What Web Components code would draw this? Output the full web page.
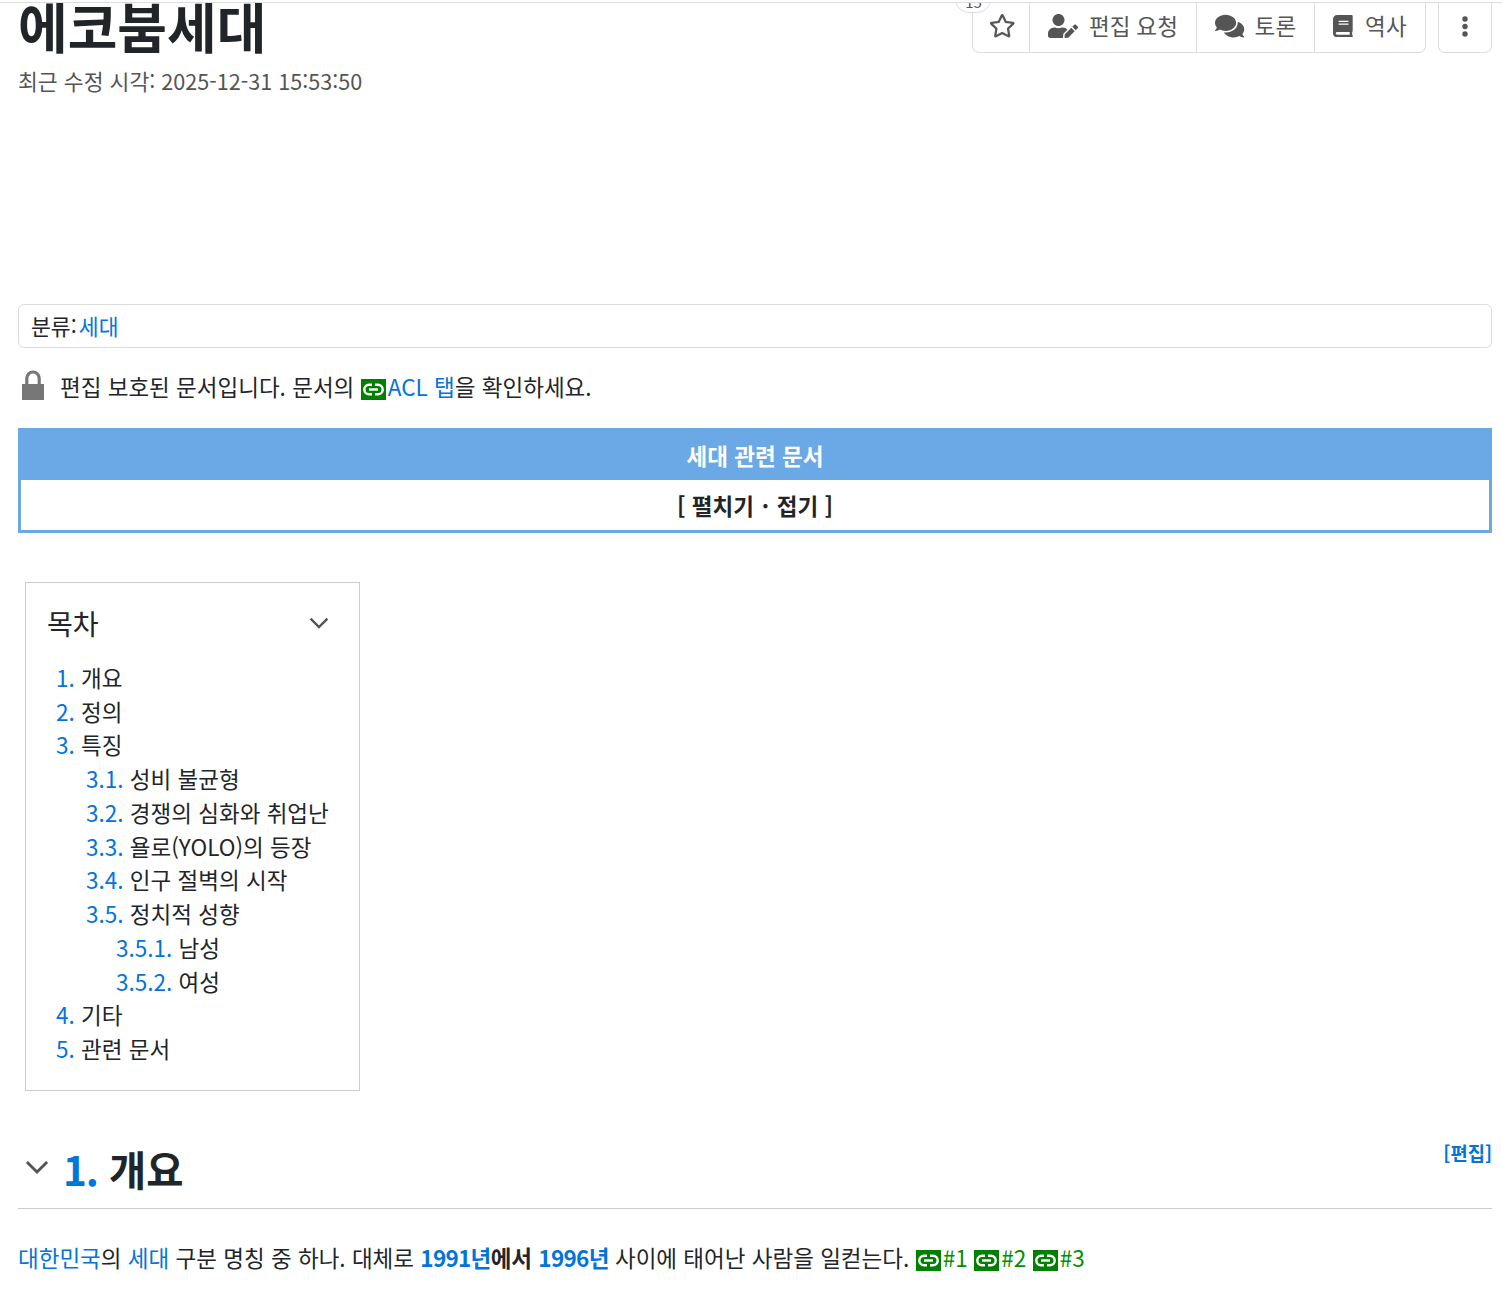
<!DOCTYPE html>
<html lang="ko"><head><meta charset="utf-8"><title>에코붐세대</title>
<style>
html,body{margin:0;padding:0;background:#fff}
body{font:22.5px/33.75px "Noto Sans CJK KR","Noto Sans",sans-serif;color:#212529;width:1502px;height:1290px;overflow:hidden}
</style></head><body>
<wiki-page>
  <wiki-header title-text="에코붐세대" meta="최근 수정 시각: 2025-12-31 15:53:50"></wiki-header>
  <wiki-category>세대</wiki-category>
  <wiki-acl></wiki-acl>
  <nav-box heading="세대 관련 문서"></nav-box>
  <wiki-toc></wiki-toc>
  <wiki-heading num="1." label="개요"></wiki-heading>
  <wiki-para></wiki-para>
</wiki-page>
<script>
const LINK=`<svg viewBox="0 0 25 21" width="25" height="21" style="display:inline-block;vertical-align:-3.5px;background:#008000;margin-right:2.2px"><g fill="none" stroke="#fff" stroke-width="2.4"><path d="M11 5.8H8a4.7 4.7 0 0 0 0 9.4H11"/><path d="M14 5.8h3a4.7 4.7 0 0 1 0 9.4H14"/><path d="M8 10.5h9"/></g></svg>`;
const CHEV=s=>`<svg viewBox="0 0 20 12" width="${s}" height="${s*.6}" style="display:block"><path d="M1.6 1.6 10 10l8.4-8.4" fill="none" stroke="#555" stroke-width="2.4"/></svg>`;
const ICONS={
star:[576,`M528.1 171.5L382 150.2 316.7 17.8c-11.7-23.6-45.6-23.9-57.4 0L194 150.2 47.9 171.5c-26.2 3.8-36.7 36.1-17.7 54.6l105.7 103-25 145.5c-4.5 26.3 23.2 46 46.4 33.7L288 439.6l130.7 68.7c23.2 12.2 50.9-7.4 46.4-33.7l-25-145.5 105.7-103c19-18.5 8.5-50.8-17.7-54.6zM388.6 312.3l23.7 138.4L288 385.4l-124.3 65.3 23.7-138.4-100.6-98 139-20.2 62.2-126 62.2 126 139 20.2-100.6 98z`,23.5],
edit:[640,`M224 256c70.7 0 128-57.3 128-128S294.7 0 224 0 96 57.3 96 128s57.3 128 128 128zm89.6 32h-16.7c-22.2 10.2-46.9 16-72.9 16s-50.6-5.8-72.9-16h-16.7C60.2 288 0 348.2 0 422.4V464c0 26.5 21.5 48 48 48h274.9c-2.4-6.8-3.4-14-2.6-21.3l6.8-60.9 1.2-11.1 7.9-7.9 77.3-77.3c-24.5-27.7-60-45.5-99.9-45.5zm45.3 145.3l-6.8 61c-1.1 10.2 7.5 18.8 17.6 17.6l60.9-6.8 137.9-137.9-71.7-71.7-137.9 137.8zM633 268.9L595.1 231c-9.3-9.3-24.5-9.3-33.8 0l-37.8 37.8-4.1 4.1 71.8 71.7 41.8-41.8c9.3-9.4 9.3-24.5 0-33.9z`,24],
talk:[576,`M416 192c0-88.4-93.1-160-208-160S0 103.6 0 192c0 34.3 14.1 65.9 38 92-13.4 30.2-35.5 54.2-35.8 54.5-2.2 2.3-2.8 5.7-1.5 8.7S4.8 352 8 352c36.6 0 66.9-12.3 88.7-25 32.2 15.7 70.3 25 111.3 25 114.9 0 208-71.6 208-160zm122 220c23.9-26 38-57.7 38-92 0-66.9-53.5-124.2-129.3-148.1.9 6.6 1.3 13.3 1.3 20.1 0 105.9-107.7 192-240 192-10.8 0-21.3-.8-31.7-1.9C207.8 439.6 281.8 480 368 480c41 0 79.1-9.2 111.3-25 21.8 12.7 52.1 25 88.7 25 3.2 0 6.1-1.9 7.3-4.8 1.3-2.9.7-6.3-1.5-8.7-.3-.3-22.4-24.2-35.8-54.5z`,26],
book:[448,`M448 360V24c0-13.3-10.7-24-24-24H96C43 0 0 43 0 96v320c0 53 43 96 96 96h328c13.3 0 24-10.7 24-24v-16c0-7.5-3.5-14.3-8.9-18.7-4.2-15.4-4.2-59.3 0-74.7 5.4-4.3 8.9-11.1 8.9-18.6zM128 134c0-3.3 2.7-6 6-6h212c3.3 0 6 2.7 6 6v20c0 3.3-2.7 6-6 6H134c-3.3 0-6-2.7-6-6v-20zm0 64c0-3.3 2.7-6 6-6h212c3.3 0 6 2.7 6 6v20c0 3.3-2.7 6-6 6H134c-3.3 0-6-2.7-6-6v-20zm253.4 250H96c-17.7 0-32-14.3-32-32 0-17.6 14.4-32 32-32h285.4c-1.9 17.1-1.9 46.9 0 64z`,22.5]};
const ic=n=>{const [w,d,h]=ICONS[n];return `<svg viewBox="0 0 ${w} 512" height="${h}" width="${h*w/512}" fill="#555" style="display:block;flex:none"><path d="${d}"/></svg>`};
function def(name,fn){customElements.define(name,class extends HTMLElement{connectedCallback(){if(this.shadowRoot)return;this.attachShadow({mode:'open'}).innerHTML=fn(this)}})}

def('wiki-page',()=>`<style>:host{display:block;border-top:1px solid #ddd;margin-top:2px;padding:0 10px 0 18px}</style><slot></slot>`);

def('wiki-header',h=>`<style>
:host{display:flex;justify-content:space-between;align-items:flex-start;height:301px;overflow:hidden}
h1{margin:-9px 0 0;font-size:54px;line-height:63px;font-weight:700;white-space:nowrap}
.meta{color:#555;margin-top:7px;white-space:nowrap;font-size:21.6px}
.tools{display:flex;gap:12px;position:relative}
</style>
<div><h1>${h.getAttribute('title-text')}</h1><div class="meta">${h.getAttribute('meta')}</div></div>
<div class="tools"><wiki-toolbar></wiki-toolbar><wiki-more></wiki-more></div>`);

def('wiki-toolbar',()=>`<style>
:host{display:flex;position:relative;height:49.5px;border:1px solid #ddd;border-top:0;border-radius:0 0 7px 7px;box-sizing:border-box;color:#555;background:#fff}
.b{display:flex;align-items:center;gap:11px;padding:0 18px 3px;border-left:1px solid #ddd;white-space:nowrap;letter-spacing:.25px;word-spacing:-1px}
.s{border-left:0;padding:0 13px 3px 16px}
.t{gap:10px;padding-right:18px}
.h{gap:12px}
.badge{position:absolute;left:-18px;top:-18px;width:36px;height:28px;box-sizing:border-box;border:1px solid #ddd;border-radius:14px;background:#fff;font-size:15px;line-height:32px;text-align:center;color:#555}
</style>
<span class="badge">15</span>
<div class="b s">${ic('star')}</div>
<div class="b">${ic('edit')}<span>편집 요청</span></div>
<div class="b t">${ic('talk')}<span>토론</span></div>
<div class="b h">${ic('book')}<span>역사</span></div>`);

def('wiki-more',()=>`<style>
:host{display:flex;align-items:center;justify-content:center;width:54px;height:49.5px;padding-bottom:2px;border:1px solid #ddd;border-top:0;border-radius:0 0 7px 7px;box-sizing:border-box}
</style><svg width="6" height="21" viewBox="0 0 6 21" fill="#555"><circle cx="3" cy="3" r="2.7"/><circle cx="3" cy="10.5" r="2.7"/><circle cx="3" cy="18" r="2.7"/></svg>`);

def('wiki-category',()=>`<style>
:host{display:block;height:44px;box-sizing:border-box;border:1px solid #ddd;border-radius:6px;padding:3.5px 12px;white-space:nowrap;font-size:21.6px}
a{color:#0275d8;text-decoration:none;margin-left:2px}
</style>분류:<a href="#"><slot></slot></a>`);

def('wiki-acl',()=>`<style>
:host{display:flex;align-items:center;height:34px;margin:22px 0 24px;gap:16px;padding-left:4px;white-space:nowrap}
svg.lock{flex:none;display:block;margin-bottom:4px}
a{color:#0275d8;text-decoration:none}
</style><svg class="lock" width="22" height="30" viewBox="0 0 22 30"><path d="M4.8 15V8.2a6.2 6.2 0 0 1 12.4 0V15" fill="none" stroke="#777" stroke-width="3.2"/><rect x="0" y="14" width="22" height="16" fill="#777"/></svg>
<span>편집 보호된 문서입니다. 문서의 ${LINK}<a href="#">ACL 탭</a>을 확인하세요.</span>`);

def('nav-box',n=>`<style>
:host{display:block;border:3px solid #6aa9e6;border-top:0;box-sizing:border-box;height:105px;text-align:center;font-weight:700}
.h{background:#6aa9e6;color:#fff;height:52px;margin:0 -3px;line-height:54px}
.t{line-height:50px;height:50px}
.d{margin:0 1.5px}
</style><div class="h">${n.getAttribute('heading')}</div><div class="t">[ 펼치기 <span class="d">·</span> 접기 ]</div>`);

const TOC=[[0,'1.','개요'],[0,'2.','정의'],[0,'3.','특징'],[1,'3.1.','성비 불균형'],[1,'3.2.','경쟁의 심화와 취업난'],[1,'3.3.','욜로(YOLO)의 등장'],[1,'3.4.','인구 절벽의 시작'],[1,'3.5.','정치적 성향'],[2,'3.5.1.','남성'],[2,'3.5.2.','여성'],[0,'4.','기타'],[0,'5.','관련 문서']];
def('wiki-toc',()=>`<style>
:host{display:block;width:335px;height:509px;box-sizing:border-box;border:1px solid #ccc;margin:49px 0 0 7px;padding:22px 21px 0 21px}
.t{display:flex;justify-content:space-between;align-items:center;font-size:28.125px;line-height:36px;height:36px;padding-right:9px;margin-bottom:19.75px}
ol{list-style:none;margin:0;padding:0 0 0 9px}
li{height:33.75px;white-space:nowrap}
a{color:#0275d8;text-decoration:none}
.l1{padding-left:30px}.l2{padding-left:60px}
</style><div class="t"><span>목차</span>${CHEV(20)}</div>
<ol>${TOC.map(([l,n,t])=>`<li class="l${l}"><a href="#">${n}</a> ${t}</li>`).join('')}</ol>`);

def('wiki-heading',h=>`<style>
:host{display:flex;align-items:flex-end;position:relative;height:118px;box-sizing:border-box;border-bottom:1px solid #ccc;padding-bottom:11px;gap:14px;white-space:nowrap}
.c{margin:0 0 23px 7px}
h2{margin:0;font-size:40.5px;line-height:57px;font-weight:700}
h2 a{color:#0275d8;text-decoration:none;letter-spacing:-1.2px}
.e{position:absolute;right:0;top:45px;font-size:18.75px;line-height:34px;font-weight:700;color:#0275d8}
</style><span class="c">${CHEV(24)}</span><h2><a href="#">${h.getAttribute('num')}</a> ${h.getAttribute('label')}</h2><a class="e">[편집]</a>`);

def('wiki-para',()=>`<style>
:host{display:block;margin-top:32px;white-space:nowrap}
a{color:#0275d8;text-decoration:none}
b a{letter-spacing:-.7px}
.x{color:#009000}
</style><a href="#">대한민국</a>의 <a href="#">세대</a> 구분 명칭 중 하나. 대체로 <b><a href="#">1991년</a>에서 <a href="#">1996년</a></b> 사이에 태어난 사람을 일컫는다. ${LINK}<a class="x" href="#">#1</a> ${LINK}<a class="x" href="#">#2</a> ${LINK}<a class="x" href="#">#3</a>`);
</script>
</body></html>
